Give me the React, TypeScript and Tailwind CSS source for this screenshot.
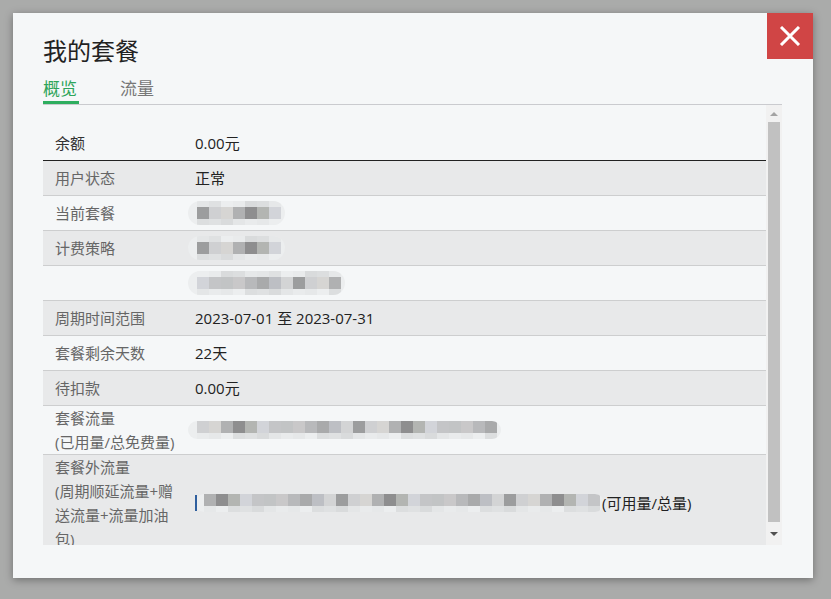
import * as React from "react"

const dark = [
  "bg-[#9c9d9e]",
  "bg-[#cfd0d2]",
  "bg-[#d6d5d3]",
  "bg-[#b0b1b2]",
  "bg-[#8e8e8f]",
  "bg-[#b3b5b2]",
  "bg-[#d2d4d9]",
  "bg-[#c4c5c7]",
  "bg-[#c2c4c5]",
  "bg-[#c9c8c9]",
  "bg-[#b8b9bb]",
  "bg-[#a9aaab]",
  "bg-[#bdbfc4]",
  "bg-[#d3d4d5]",
]

const light = [
  "bg-[#e4e6e7]",
  "bg-[#dcdedf]",
  "bg-[#e9ebec]",
  "bg-[#dfe1e2]",
  "bg-[#e6e8e9]",
  "bg-[#d9dbdc]",
  "bg-[#eceeef]",
]

function Blur({ cells, seed = 0, bottom = false }: { cells: number; seed?: number; bottom?: boolean }) {
  const items = Array.from({ length: cells })
  return (
    <div className="-ml-[7px] flex flex-col overflow-hidden rounded-full bg-[#eceeef] pl-[9px] pr-[4px]">
      {!bottom && (
        <div className="flex">
          {items.map((_, i) => (
            <div key={i} className={`h-[6px] w-[12px] ${light[(i * 3 + seed) % light.length]}`} />
          ))}
        </div>
      )}
      <div className="flex">
        {items.map((_, i) => (
          <div key={i} className={`h-[12px] w-[12px] ${dark[(i + seed) % dark.length]}`} />
        ))}
      </div>
      <div className="flex">
        {items.map((_, i) => (
          <div key={i} className={`h-[6px] w-[12px] ${light[(i * 2 + seed + 1) % light.length]}`} />
        ))}
      </div>
    </div>
  )
}

interface Row {
  label: React.ReactNode
  value: React.ReactNode
}

const rows: Row[] = [
  { label: "用户状态", value: "正常" },
  { label: "当前套餐", value: <Blur cells={7} seed={0} /> },
  { label: "计费策略", value: <Blur cells={7} seed={0} /> },
  { label: "", value: <Blur cells={12} seed={6} /> },
  { label: "周期时间范围", value: "2023-07-01 至 2023-07-31" },
  { label: "套餐剩余天数", value: "22天" },
  { label: "待扣款", value: "0.00元" },
  {
    label: (
      <>
        <div>套餐流量</div>
        <div>(已用量/总免费量)</div>
      </>
    ),
    value: <Blur cells={25} seed={1} bottom />,
  },
  {
    label: (
      <>
        <div>套餐外流量</div>
        <div>(周期顺延流量+赠</div>
        <div>送流量+流量加油</div>
        <div>包)</div>
      </>
    ),
    value: (
      <div className="flex items-center">
        <div className="z-10 h-[16px] w-[2px] bg-[#2f5f9e]" />
        <div className="-ml-[2px] pl-[7px]">
          <Blur cells={33} seed={3} bottom />
        </div>
        <span className="-ml-[2px] text-[#222]">(可用量/总量)</span>
      </div>
    ),
  },
]

export default function App() {
  return (
    <div
      className="h-[599px] w-[831px] overflow-hidden bg-[#aaabaa] pl-[13px] pt-[13px]"
      style={{ fontFamily: '"Open Sans", "Noto Sans CJK SC", sans-serif' }}
    >
      <div className="relative flex h-[565px] w-[800px] flex-col bg-[#f5f7f8] pl-[30px] pr-[31px] shadow-[0_2px_8px_rgba(0,0,0,0.35)]">
        <button className="absolute right-0 top-0 flex h-[46px] w-[46px] items-center justify-center bg-[#d04545]">
          <svg width="22" height="20" viewBox="0 0 22 20">
            <path d="M2 1 L20 19 M20 1 L2 19" stroke="#fff" strokeWidth="3" fill="none" />
          </svg>
        </button>

        <h1 className="mt-[22px] text-[24px] leading-[32px] text-[#222]">我的套餐</h1>

        <div className="mt-[12px] flex gap-[41px] border-b border-[#cacbcf]">
          <div className="flex flex-col">
            <span className="text-[17px] leading-[20px] text-[#2ea45a]">概览</span>
            <div className="mt-[2px] h-[3px] w-[36px] bg-[#2eae5f]" />
          </div>
          <span className="text-[17px] leading-[20px] text-[#777]">流量</span>
        </div>

        <div className="flex h-[440px] overflow-hidden">
          <div className="flex-1 overflow-hidden pt-[21px] text-[15px] leading-[24px]">
            <div className="flex min-h-[35px] items-center border-b border-[#222]">
              <div className="w-[140px] pl-[12px] text-[#333]">余额</div>
              <div className="pl-[12px] text-[#222]">0.00元</div>
            </div>
            {rows.map((r, i) => (
              <div
                key={i}
                className={`flex min-h-[35px] items-center border-b border-[#cdcecf] ${i % 2 === 0 ? "bg-[#e8e9ea]" : ""}`}
              >
                <div className="w-[140px] shrink-0 pl-[12px] text-[#666]">{r.label}</div>
                <div className="flex items-center pl-[12px] text-[#222]">{r.value}</div>
              </div>
            ))}
          </div>

          <div className="flex w-[16px] flex-col items-center bg-[#f1f1f1]">
            <div className="flex h-[17px] items-center justify-center">
              <div className="h-0 w-0 border-x-[4px] border-b-[4px] border-x-transparent border-b-[#a3a3a3]" />
            </div>
            <div className="h-[400px] w-[12px] bg-[#c1c1c1]" />
            <div className="flex flex-1 items-center justify-center">
              <div className="h-0 w-0 border-x-[4px] border-t-[4px] border-x-transparent border-t-[#505050]" />
            </div>
          </div>
        </div>
      </div>
    </div>
  )
}
